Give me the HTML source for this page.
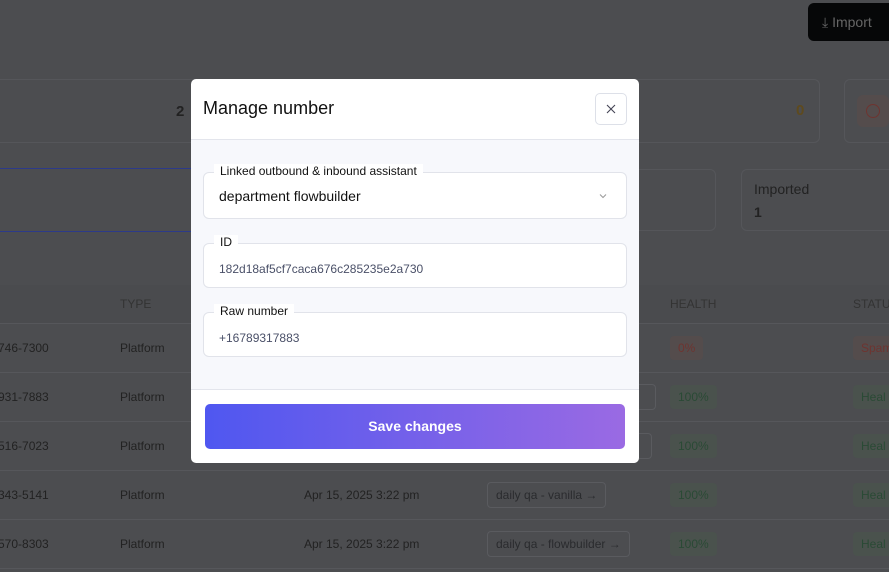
<!DOCTYPE html>
<html><head><style>
*{box-sizing:border-box;margin:0;padding:0}
body{width:889px;height:572px;overflow:hidden;background:#4c4d50;font-family:"Liberation Sans",sans-serif;position:relative;color:#1a1a1a}
.a{position:absolute}
.card{position:absolute;border:1px solid #55565a;border-radius:6px}
.t{position:absolute;font-size:12px;color:#222}
.pill{position:absolute;border:1px solid #5a5b5f;border-radius:4px;font-size:12px;color:#2a2b2e;padding:5px 8px}
.h{position:absolute;background:#4a524d;color:#2a4a35;font-size:12px;border-radius:4px;padding:5px 8px}
.r{background:#544c4c;color:#6e3430}
.line{position:absolute;left:0;width:889px;height:1px;background:#56575b}
.f{position:absolute;left:203px;width:424px;background:#fff;border:1px solid #e1e3ea;border-radius:6px}
.lab{position:absolute;top:-9px;left:10px;background:#fff;padding:0 6px;font-size:12px;color:#111}
</style></head><body>
<div class="a" style="left:808px;top:3px;width:90px;height:38px;background:#060708;border-radius:6px;color:#666;font-size:14px;padding:11px 0 0 14px">⤓ Import</div>
<div class="card" style="left:-10px;top:79px;width:830px;height:64px"></div>
<div class="t" style="left:176px;top:103px;font-size:15px;font-weight:bold">2</div>
<div class="t" style="left:796px;top:102px;font-size:15px;font-weight:bold;color:#5e4a1e">0</div>
<div class="card" style="left:844px;top:79px;width:60px;height:64px"></div>
<div class="a" style="left:857px;top:95px;width:32px;height:32px;background:#544c4c;border-radius:6px"></div>
<div class="a" style="left:866px;top:104px;width:14px;height:14px;border:1.5px solid #6e3430;border-radius:50%"></div>
<div class="a" style="left:-10px;top:168px;width:201px;height:64px;border-top:1px solid #2c3a8a;border-bottom:1px solid #2c3a8a"></div>
<div class="card" style="left:630px;top:169px;width:86px;height:62px"></div>
<div class="card" style="left:741px;top:169px;width:160px;height:62px"></div>
<div class="t" style="left:754px;top:181px;font-size:14px">Imported</div>
<div class="t" style="left:754px;top:204px;font-size:14px;font-weight:bold">1</div>
<div class="a" style="left:0;top:285px;width:889px;height:38px;background:#4a4b4e"></div>
<div class="t" style="left:120px;top:297px;color:#333">TYPE</div>
<div class="t" style="left:670px;top:297px;color:#333">HEALTH</div>
<div class="t" style="left:853px;top:297px;color:#333">STATUS</div>
<div class="line" style="top:323px"></div><div class="line" style="top:372px"></div><div class="line" style="top:421px"></div><div class="line" style="top:470px"></div><div class="line" style="top:519px"></div><div class="line" style="top:568px"></div>
<div class="t" style="left:-2px;top:341px">746-7300</div><div class="t" style="left:120px;top:341px">Platform</div>
<div class="t" style="left:-2px;top:390px">931-7883</div><div class="t" style="left:120px;top:390px">Platform</div>
<div class="t" style="left:-2px;top:439px">516-7023</div><div class="t" style="left:120px;top:439px">Platform</div>
<div class="t" style="left:-2px;top:488px">343-5141</div><div class="t" style="left:120px;top:488px">Platform</div>
<div class="t" style="left:-2px;top:537px">570-8303</div><div class="t" style="left:120px;top:537px">Platform</div>
<div class="t" style="left:304px;top:488px">Apr 15, 2025 3:22 pm</div>
<div class="t" style="left:304px;top:537px">Apr 15, 2025 3:22 pm</div>
<div class="pill" style="left:487px;top:482px">daily qa - vanilla →</div>
<div class="pill" style="left:487px;top:531px">daily qa - flowbuilder →</div>
<div class="pill" style="left:600px;top:384px;width:56px;height:26px"></div>
<div class="pill" style="left:600px;top:433px;width:52px;height:26px"></div>
<div class="h r" style="left:670px;top:336px">0%</div>
<div class="h" style="left:670px;top:385px">100%</div>
<div class="h" style="left:670px;top:434px">100%</div>
<div class="h" style="left:670px;top:483px">100%</div>
<div class="h" style="left:670px;top:532px">100%</div>
<div class="h r" style="left:853px;top:336px">Spam</div>
<div class="h" style="left:853px;top:385px">Heal</div>
<div class="h" style="left:853px;top:434px">Heal</div>
<div class="h" style="left:853px;top:483px">Heal</div>
<div class="h" style="left:853px;top:532px">Heal</div>

<div class="a" style="left:191px;top:79px;width:448px;height:384px;background:#fff;border-radius:5px;overflow:hidden">
 <div class="a" style="left:0;top:60px;width:448px;height:251px;background:#f7f8fc;border-top:1px solid #e3e5ec;border-bottom:1px solid #e3e5ec"></div>
</div>
<div class="t" style="left:203px;top:98px;font-size:18px;color:#111">Manage number</div>
<div class="a" style="left:595px;top:93px;width:32px;height:32px;border:1px solid #dde0e8;border-radius:5px;background:#fff">
<svg width="30" height="30" viewBox="0 0 30 30"><path d="M11 11L19 19M19 11L11 19" stroke="#445" stroke-width="1.1"/></svg></div>
<div class="f" style="top:172px;height:47px"><span class="lab">Linked outbound &amp; inbound assistant</span>
<div class="a" style="left:15px;top:15px;font-size:14px;color:#111">department flowbuilder</div>
<svg class="a" style="left:394px;top:19px" width="10" height="8" viewBox="0 0 10 8"><path d="M2 2.5L5 5.5L8 2.5" fill="none" stroke="#999" stroke-width="1"/></svg></div>
<div class="f" style="top:243px;height:45px"><span class="lab">ID</span>
<div class="a" style="left:15px;top:18px;font-size:12px;color:#4a5068">182d18af5cf7caca676c285235e2a730</div></div>
<div class="f" style="top:312px;height:45px"><span class="lab">Raw number</span>
<div class="a" style="left:15px;top:18px;font-size:12px;color:#4a5068">+16789317883</div></div>
<div class="a" style="left:205px;top:404px;width:420px;height:45px;border-radius:5px;background:linear-gradient(90deg,#4f57f0,#9a6ae3);color:#fff;font-size:14px;font-weight:bold;text-align:center;line-height:45px">Save changes</div>
</body></html>
